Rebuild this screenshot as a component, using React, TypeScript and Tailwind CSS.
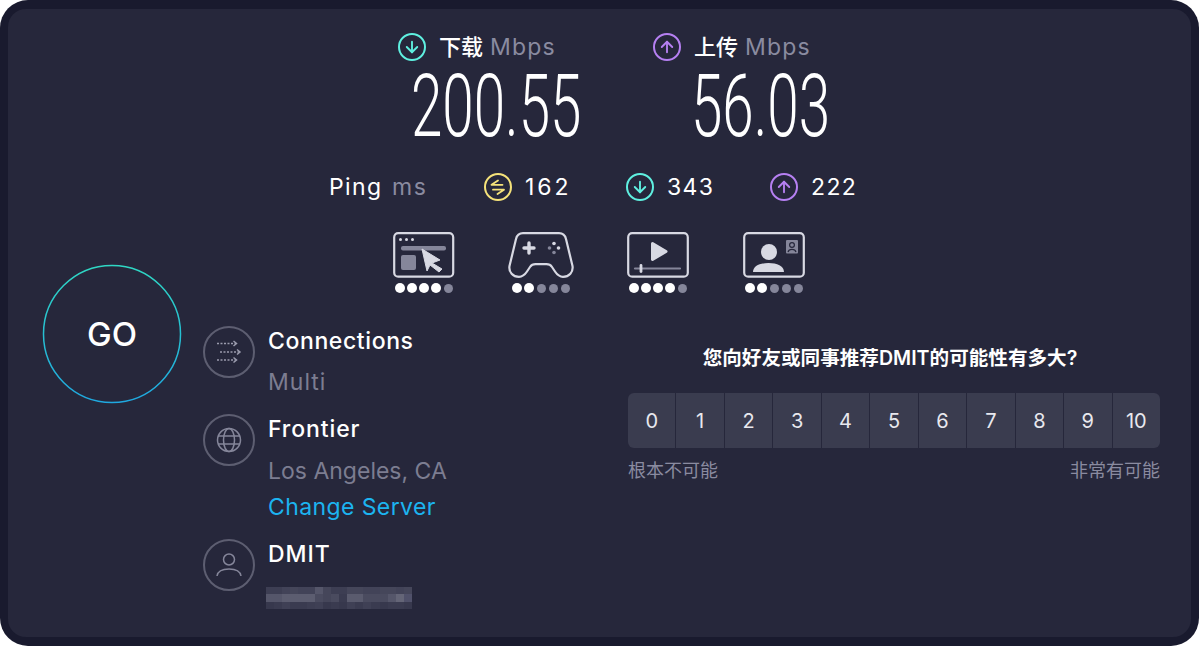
import { ArrowDown, ArrowUp } from 'lucide-react'

const sans = "font-['Inter','Noto_Sans_CJK_SC',sans-serif]"

const blur = [
  ['#3d3e53', '#3d3e53', '#424358', '#45465a', '#424358', '#424358', '#55566a', '#45465a', '#3d3e53', '#3d3e53', '#45465a', '#45465a', '#424358', '#424358', '#45465a', '#45465a', '#424358', '#45465a'],
  ['#55566a', '#55566a', '#5c5d70', '#5c5d70', '#5c5d70', '#5c5d70', '#4a4b5f', '#45465a', '#4a4b5f', '#3a3b50', '#5a5b6e', '#5a5b6e', '#4a4b5f', '#4a4b5f', '#4a4b5f', '#55566a', '#646577', '#50516a'],
  ['#37384d', '#3a3b50', '#3f4055', '#3a3b50', '#3a3b50', '#3d3e53', '#3f4055', '#37384d', '#3a3b50', '#37384d', '#3f4055', '#3a3b50', '#3f4055', '#3a3b50', '#37384d', '#3a3b50', '#3a3b50', '#37384d'],
]

function Metric({ icon, color }: { icon: 'down' | 'up'; color: string }) {
  const Icon = icon === 'down' ? ArrowDown : ArrowUp
  return (
    <span className={`w-7 h-7 ${color} rounded-full border-2 border-current flex items-center justify-center shrink-0`}>
      <Icon size={18} strokeWidth={2.5} />
    </span>
  )
}

function Dots({ on }: { on: number }) {
  return (
    <div className="flex mt-[5px] justify-center items-center">
      {[0, 1, 2, 3, 4].map((i) => (
        <span key={i} className="w-3 h-[10px] flex items-center justify-center">
          <span className={i < on ? 'w-[10px] h-[10px] rounded-full bg-white' : 'w-[9px] h-[9px] rounded-full bg-[#85869a]'} />
        </span>
      ))}
    </div>
  )
}

function BrowseIcon() {
  return (
    <svg width="62" height="46" viewBox="0 0 62 46" fill="none" className="block">
      <rect x="1.2" y="1.2" width="59" height="43.5" rx="4" stroke="#d8d9e3" strokeWidth="2.2" />
      <circle cx="7.5" cy="7.5" r="1.5" fill="#d8d9e3" />
      <circle cx="13.5" cy="7.5" r="1.5" fill="#d8d9e3" />
      <circle cx="19.5" cy="7.5" r="1.5" fill="#d8d9e3" />
      <rect x="8" y="14" width="45" height="4.5" rx="2" fill="#85869a" />
      <rect x="8" y="23" width="15" height="15" rx="2" fill="#85869a" />
      <path d="M29 17 L47 28 L39 31 L49 37 L46 40 L37 33 L34 39 Z" fill="#d8d9e3" stroke="#d8d9e3" strokeWidth="1" strokeLinejoin="round" />
    </svg>
  )
}

function GameIcon() {
  return (
    <svg width="66" height="46" viewBox="0 0 66 46" fill="none" className="block">
      <path d="M15 1.2 H51 C55 1.2 57 3 58 7 L64.5 34 C65.5 40 61 44.8 55 44.8 C51 44.8 49 42.5 47 39.5 L44 35 C42.5 32.8 41 32.2 38.5 32.2 H27.5 C25 32.2 23.5 32.8 22 35 L19 39.5 C17 42.5 15 44.8 11 44.8 C5 44.8 0.5 40 1.5 34 L8 7 C9 3 11 1.2 15 1.2 Z" stroke="#d8d9e3" strokeWidth="2.2" />
      <path d="M21 11 V21 M16 16 H26" stroke="#d8d9e3" strokeWidth="3.4" strokeLinecap="round" />
      <circle cx="46" cy="11.5" r="1.8" fill="#d8d9e3" />
      <circle cx="46" cy="20.5" r="1.8" fill="#85869a" />
      <circle cx="41.5" cy="16" r="1.8" fill="#85869a" />
      <circle cx="50.5" cy="16" r="1.8" fill="#d8d9e3" />
    </svg>
  )
}

function VideoIcon() {
  return (
    <svg width="62" height="46" viewBox="0 0 62 46" fill="none" className="block">
      <rect x="1.2" y="1.2" width="59.6" height="43.5" rx="4" stroke="#d8d9e3" strokeWidth="2.2" />
      <path d="M25.5 11.5 L39 19.5 L25.5 27.5 Z" fill="#d8d9e3" stroke="#d8d9e3" strokeWidth="3" strokeLinejoin="round" />
      <path d="M8 36.5 H53" stroke="#85869a" strokeWidth="2.2" strokeLinecap="round" />
      <path d="M14 33.5 V39.5" stroke="#d8d9e3" strokeWidth="2.8" strokeLinecap="round" />
    </svg>
  )
}

function ProfileIcon() {
  return (
    <svg width="62" height="46" viewBox="0 0 62 46" fill="none" className="block">
      <rect x="1.2" y="1.2" width="59.6" height="43.5" rx="4" stroke="#d8d9e3" strokeWidth="2.2" />
      <circle cx="26" cy="20" r="8" fill="#d8d9e3" />
      <path d="M10 40 C10 34 17 31 25.5 31 C34 31 41 34 41 40 Z" fill="#d8d9e3" />
      <rect x="43" y="8" width="12" height="13.5" rx="1" fill="#85869a" />
      <circle cx="49" cy="13" r="2.4" stroke="#26273b" strokeWidth="1.2" />
      <path d="M45 20 C46 16.5 52 16.5 53 20" stroke="#26273b" strokeWidth="1.2" />
    </svg>
  )
}

function Detail({ icon, title, tracking, children, className }: { icon: React.ReactNode; title: string; tracking: string; children: React.ReactNode; className?: string }) {
  return (
    <div className={`flex gap-[13px] ${className ?? ''}`}>
      <span className="w-[52px] h-[52px] rounded-full border-2 border-[#5d5e71] flex items-center justify-center shrink-0">{icon}</span>
      <div>
        <div className={`text-[23px] leading-[30px] font-medium text-white ${tracking}`}>{title}</div>
        {children}
      </div>
    </div>
  )
}

export default function App() {
  return (
    <div className={`w-[1199px] h-[646px] bg-white overflow-hidden ${sans}`}>
      <div className="h-full rounded-[28px] bg-[#191a2e] px-[8px] py-[9px]">
        <div className="h-full rounded-[18px] bg-[#26273b] flex">
          <div className="w-[195px] shrink-0 pl-[34px] pt-[255px]">
            <svg width="140" height="140" viewBox="0 0 140 140" className="block">
              <defs>
                <linearGradient id="go" x1="0" y1="0" x2="0" y2="1">
                  <stop offset="0" stopColor="#2fd8c4" />
                  <stop offset="1" stopColor="#1fa8e0" />
                </linearGradient>
              </defs>
              <circle cx="70" cy="70" r="68.5" fill="none" stroke="url(#go)" strokeWidth="1.5" />
              <text x="70" y="81.5" textAnchor="middle" fill="#fff" fontSize="33" fontWeight="500" fontFamily="Inter, sans-serif">GO</text>
            </svg>
          </div>

          <div className="flex-1 flex flex-col">
            <div className="flex ml-[195px] pt-[23px]">
              <div className="w-[255px]">
                <div className="flex items-center gap-[13px] h-[30px]">
                  <Metric icon="down" color="text-[#5ff0e0]" />
                  <span className="text-[22px] text-white font-medium">下载</span>
                  <span className="-ml-[6px] text-[23px] text-[#8a8ba0] tracking-[1.2px]">Mbps</span>
                </div>
                <div className="text-[87px] leading-[68px] mt-[10px] ml-[13px] font-['Roboto',sans-serif] font-light text-white origin-left scale-x-[0.65] whitespace-nowrap">200.55</div>
              </div>
              <div>
                <div className="flex items-center gap-[13px] h-[30px]">
                  <Metric icon="up" color="text-[#b680f2]" />
                  <span className="text-[22px] text-white font-medium">上传</span>
                  <span className="-ml-[6px] text-[23px] text-[#8a8ba0] tracking-[1.2px]">Mbps</span>
                </div>
                <div className="text-[87px] leading-[68px] mt-[10px] ml-[38px] font-['Roboto',sans-serif] font-light text-white origin-left scale-x-[0.65] whitespace-nowrap">56.03</div>
              </div>
            </div>

            <div className="flex items-center h-[30px] mt-[32px] ml-[126px] text-white">
              <span className="w-[53px] text-[23px] tracking-[1.4px]">Ping</span>
              <span className="ml-[10px] w-[35px] text-[23px] text-[#8a8ba0] tracking-[1.5px]">ms</span>
              <span className="ml-[57px] w-7 h-7 rounded-full border-2 border-[#f5e27a] text-[#f5e27a] flex items-center justify-center shrink-0">
                <svg width="20" height="20" viewBox="0 0 20 20" fill="none" stroke="currentColor" strokeWidth="1.8" strokeLinecap="round" strokeLinejoin="round">
                  <path d="M14.5 7.8 H3.5 L10 3.5" />
                  <path d="M5 12.7 H16 L9.5 17" />
                </svg>
              </span>
              <span className="ml-[13px] w-[46px] text-[23px] tracking-[3px]">162</span>
              <span className="ml-[55px]"><Metric icon="down" color="text-[#5ff0e0]" /></span>
              <span className="ml-[13px] w-[47px] text-[23px] tracking-[1.4px]">343</span>
              <span className="ml-[56px]"><Metric icon="up" color="text-[#b680f2]" /></span>
              <span className="ml-[13px] w-[46px] text-[23px] tracking-[1.4px]">222</span>
            </div>

            <div className="flex gap-[53px] mt-[30px] ml-[190px]">
              <div><BrowseIcon /><Dots on={4} /></div>
              <div><GameIcon /><Dots on={2} /></div>
              <div><VideoIcon /><Dots on={4} /></div>
              <div className="ml-px"><ProfileIcon /><Dots on={2} /></div>
            </div>

            <div className="flex mt-[33px]">
              <div className="w-[425px]">
                <Detail
                  title="Connections"
                  tracking="tracking-[0.6px]"
                  icon={
                    <svg width="26" height="24" viewBox="0 0 26 24" fill="none" stroke="#9a9bad" strokeWidth="1.5">
                      <path d="M1 3.5 H20" strokeDasharray="2 1.5" />
                      <path d="M17.5 1 L20.5 3.5 L17.5 6" />
                      <path d="M4 12 H24" strokeDasharray="2 1.5" />
                      <path d="M21 9.5 L24 12 L21 14.5" />
                      <path d="M1 20 H20" strokeDasharray="2 1.5" />
                      <path d="M17.5 17.5 L20.5 20 L17.5 22.5" />
                    </svg>
                  }
                >
                  <div className="text-[23px] leading-[30px] mt-[11px] text-[#7c7d91] tracking-[1px]">Multi</div>
                </Detail>
                <Detail
                  className="mt-[17px]"
                  title="Frontier"
                  tracking="tracking-[0.9px]"
                  icon={
                    <svg width="26" height="26" viewBox="0 0 26 26" fill="none" stroke="#85869a" strokeWidth="1.5">
                      <circle cx="13" cy="13" r="11.5" />
                      <ellipse cx="13" cy="13" rx="5.5" ry="11.5" />
                      <path d="M2 9 H24 M2 17 H24" />
                    </svg>
                  }
                >
                  <div className="text-[23px] leading-[30px] mt-[12px] text-[#7c7d91] whitespace-nowrap">Los Angeles, CA</div>
                  <div className="text-[23px] leading-[30px] mt-[6px] text-[#1cb4f0] tracking-[0.4px] whitespace-nowrap">Change Server</div>
                </Detail>
                <Detail
                  className="mt-[17px]"
                  title="DMIT"
                  tracking="tracking-[1px]"
                  icon={
                    <svg width="26" height="26" viewBox="0 0 26 26" fill="none" stroke="#85869a" strokeWidth="1.5">
                      <circle cx="13" cy="7.5" r="5.5" />
                      <path d="M1 24 C2 18 7 17 13 17 C19 17 24 18 25 24" />
                    </svg>
                  }
                >
                  <svg width="146" height="22" viewBox="0 0 18 3" preserveAspectRatio="none" className="block mt-[18px] -ml-[2px]" shapeRendering="crispEdges">
                    {blur.map((row, y) => row.map((c, x) => <rect key={`${x}-${y}`} x={x} y={y} width="1" height="1" fill={c} />))}
                  </svg>
                </Detail>
              </div>

              <div className="w-[532px] pt-[19px]">
                <div className="text-center pr-[8px] text-[19.6px] leading-[26px] font-semibold text-white whitespace-nowrap">您向好友或同事推荐DMIT的可能性有多大?</div>
                <div className="flex gap-px mt-[22px] h-[55px] rounded-[6px] overflow-hidden">
                  {[0, 1, 2, 3, 4, 5, 6, 7, 8, 9, 10].map((n) => (
                    <div key={n} className="flex-1 bg-[#3a3c4f] flex items-center justify-center text-[20px] text-[#e8e8ee]">{n}</div>
                  ))}
                </div>
                <div className="flex justify-between mt-[10px] text-[18px] leading-[26px] text-[#8a8ba0]">
                  <span>根本不可能</span>
                  <span>非常有可能</span>
                </div>
              </div>
            </div>
          </div>
        </div>
      </div>
    </div>
  )
}
